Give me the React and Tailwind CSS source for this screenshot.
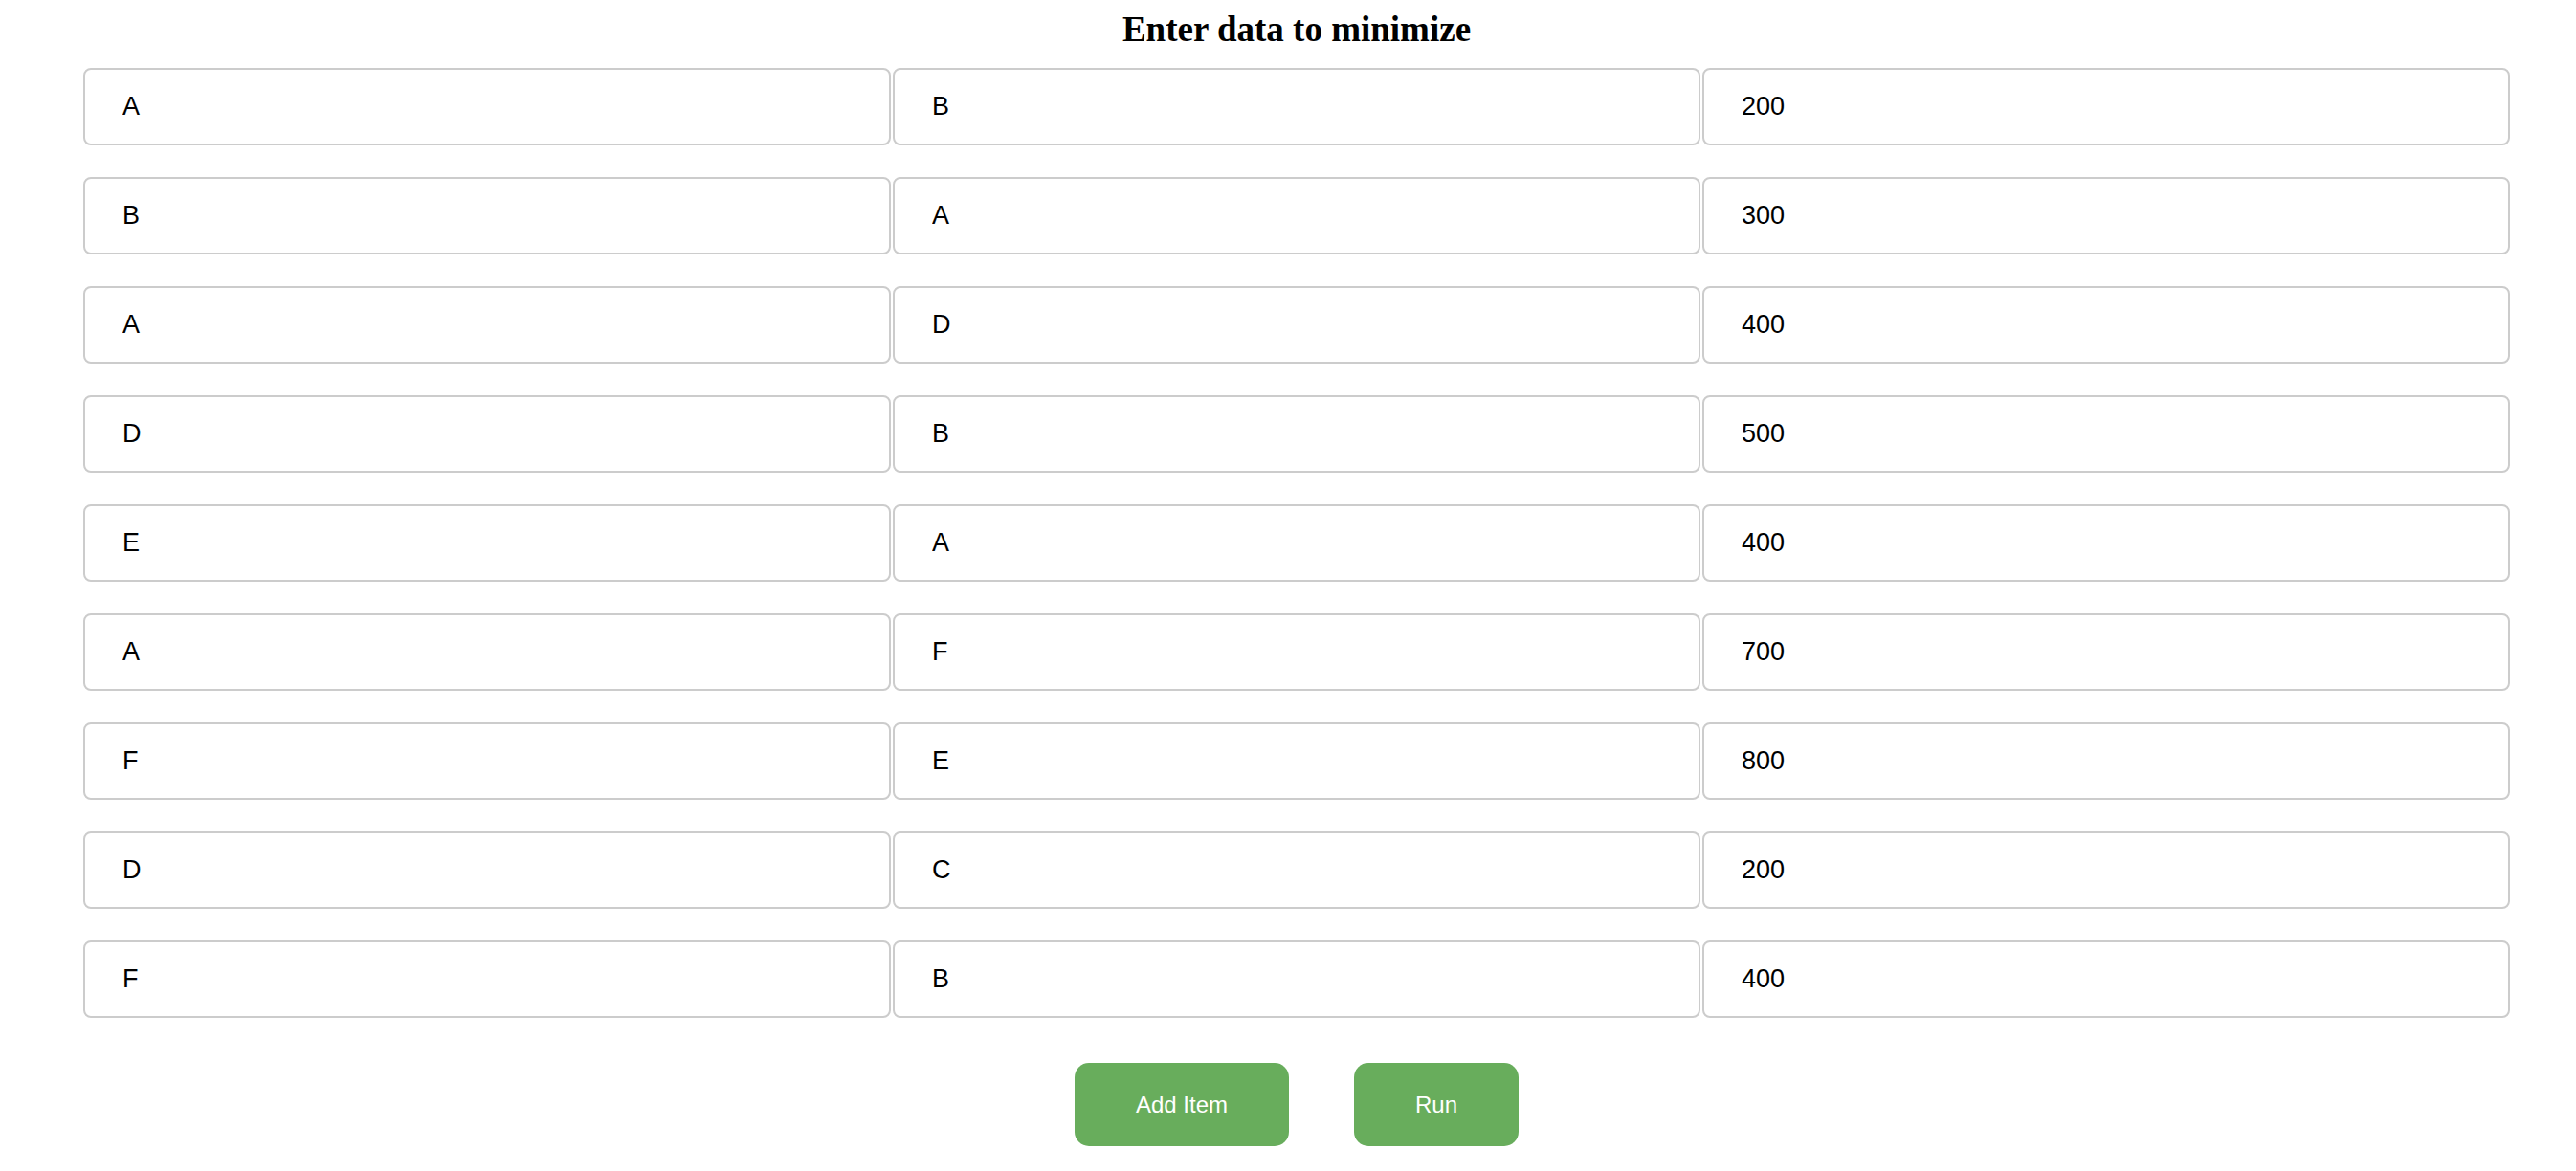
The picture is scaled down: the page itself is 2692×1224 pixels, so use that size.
const rows = [
  ["A", "B", "200"],
  ["B", "A", "300"],
  ["A", "D", "400"],
  ["D", "B", "500"],
  ["E", "A", "400"],
  ["A", "F", "700"],
  ["F", "E", "800"],
  ["D", "C", "200"],
  ["F", "B", "400"],
];

export default function App() {
  return (
    <div className="min-h-screen bg-white">
      <div className="ml-[87px] w-[2536px] pt-[11px]">
        <h1 className="text-center text-[37px] leading-[40px] font-bold text-black [font-family:'Liberation_Serif',serif]">
          Enter data to minimize
        </h1>

        {/* rows */}
        <div className="mt-[20px] grid grid-cols-3 gap-x-[2px] gap-y-[33px]">
          {rows.map((r, i) =>
            r.map((v, j) => (
              <input
                key={i + "-" + j}
                type="text"
                defaultValue={v}
                className="h-[81px] w-full rounded-[8px] border-2 border-[#cccccc] bg-white pl-[39px] text-[27px] text-black outline-none [font-family:'Liberation_Sans',Arial,sans-serif]"
              />
            ))
          )}
        </div>

        {/* buttons */}
        <div className="mt-[47px] flex justify-center gap-[68px]">
          <button className="rounded-[15px] bg-[#68ad5c] px-[64px] py-[30px] text-[24px] leading-[27px] text-white [font-family:'Liberation_Sans',Arial,sans-serif]">
            Add Item
          </button>
          <button className="rounded-[15px] bg-[#68ad5c] px-[64px] py-[30px] text-[24px] leading-[27px] text-white [font-family:'Liberation_Sans',Arial,sans-serif]">
            Run
          </button>
        </div>
      </div>
    </div>
  );
}
